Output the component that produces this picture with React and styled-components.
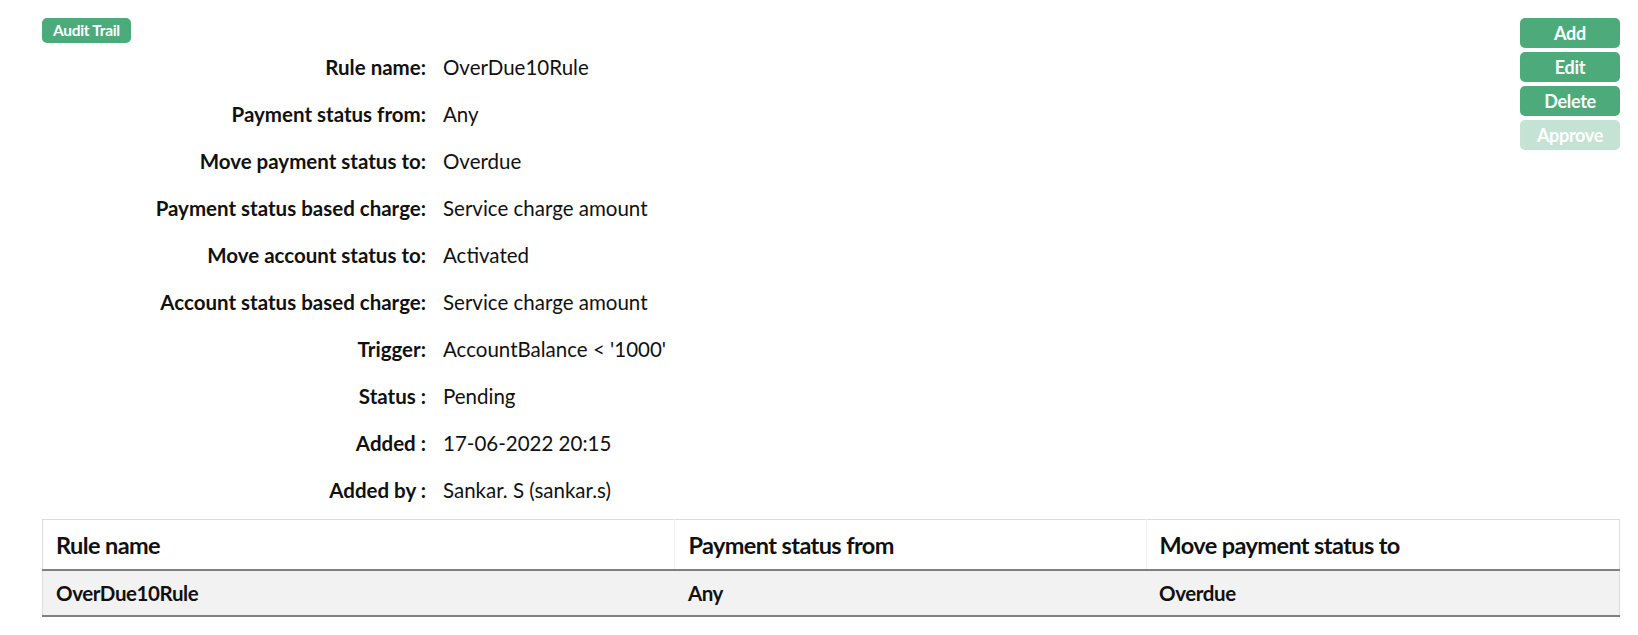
import React from "react";
import styled, { createGlobalStyle } from "styled-components";

const Global = createGlobalStyle`
  html, body { margin: 0; padding: 0; background: #fff; }
  body { font-family: Lato, "Noto Sans", sans-serif; color: #111; }
`;

const Page = styled.div`
  padding: 18px 18px 0 42px;
`;

const Top = styled.div`
  display: flex;
  justify-content: space-between;
  align-items: flex-start;
`;

const Left = styled.div`
  display: flex;
  flex-direction: column;
`;

const Badge = styled.span`
  align-self: flex-start;
  background: #4caa7b;
  color: #fff;
  font-weight: 700;
  font-size: 15.5px;
  letter-spacing: -0.3px;
  height: 25px;
  line-height: 25px;
  padding: 0 11px;
  border-radius: 5px;
`;

const Details = styled.div`
  display: grid;
  grid-template-columns: 384px auto;
  column-gap: 17px;
  grid-auto-rows: 47px;
  margin-top: 1px;
`;

const Label = styled.div`
  text-align: right;
  font-weight: 700;
  font-size: 20.5px;
  line-height: 47px;
  white-space: nowrap;
`;

const Value = styled.div`
  font-size: 20.5px;
  line-height: 47px;
  white-space: nowrap;
`;

const Actions = styled.div`
  display: flex;
  flex-direction: column;
  gap: 4px;
  width: 100px;
`;

const Btn = styled.button`
  height: 30px;
  border: none;
  border-radius: 5px;
  background: #4caa7b;
  color: #fff;
  font-family: Lato, "Noto Sans", sans-serif;
  font-weight: 700;
  font-size: 18px;
  letter-spacing: -0.3px;
  padding: 0;
  opacity: ${(p) => (p.disabled ? 0.32 : 1)};
  cursor: ${(p) => (p.disabled ? "default" : "pointer")};
`;

const Table = styled.table`
  margin-top: 5px;
  width: 1578px;
  table-layout: fixed;
  border-collapse: collapse;
  border: 1px solid #dcdcdc;
  border-bottom: none;
`;

const Th = styled.th`
  text-align: left;
  font-weight: 700;
  font-size: 23.5px;
  letter-spacing: -0.6px;
  height: 49px;
  padding: 0 13px;
  border-bottom: 2px solid #808080;
  border-left: ${(p) => (p.first ? "none" : "1px solid #eeeeee")};
  width: ${(p) => p.w}%;
`;

const Td = styled.td`
  background: #f2f2f2;
  font-size: 20.5px;
  font-weight: 700;
  letter-spacing: -0.4px;
  height: 44px;
  padding: 0 13px;
  border-bottom: 2px solid #808080;
`;

const rows = [
  ["Rule name:", "OverDue10Rule"],
  ["Payment status from:", "Any"],
  ["Move payment status to:", "Overdue"],
  ["Payment status based charge:", "Service charge amount"],
  ["Move account status to:", "Activated"],
  ["Account status based charge:", "Service charge amount"],
  ["Trigger:", "AccountBalance < '1000'"],
  ["Status :", "Pending"],
  ["Added :", "17-06-2022 20:15"],
  ["Added by :", "Sankar. S (sankar.s)"],
];

export default function App() {
  return (
    <>
      <Global />
      <Page>
        <Top>
          <Left>
            <Badge>Audit Trail</Badge>
            <Details>
              {rows.map(([l, v]) => (
                <React.Fragment key={l}>
                  <Label>{l}</Label>
                  <Value>{v}</Value>
                </React.Fragment>
              ))}
            </Details>
          </Left>
          <Actions>
            <Btn>Add</Btn>
            <Btn>Edit</Btn>
            <Btn>Delete</Btn>
            <Btn disabled>Approve</Btn>
          </Actions>
        </Top>
        <Table>
          <thead>
            <tr>
              <Th first w={40.45}>Rule name</Th>
              <Th w={29.7}>Payment status from</Th>
              <Th w={29.85}>Move payment status to</Th>
            </tr>
          </thead>
          <tbody>
            <tr>
              <Td>OverDue10Rule</Td>
              <Td>Any</Td>
              <Td>Overdue</Td>
            </tr>
          </tbody>
        </Table>
      </Page>
    </>
  );
}
